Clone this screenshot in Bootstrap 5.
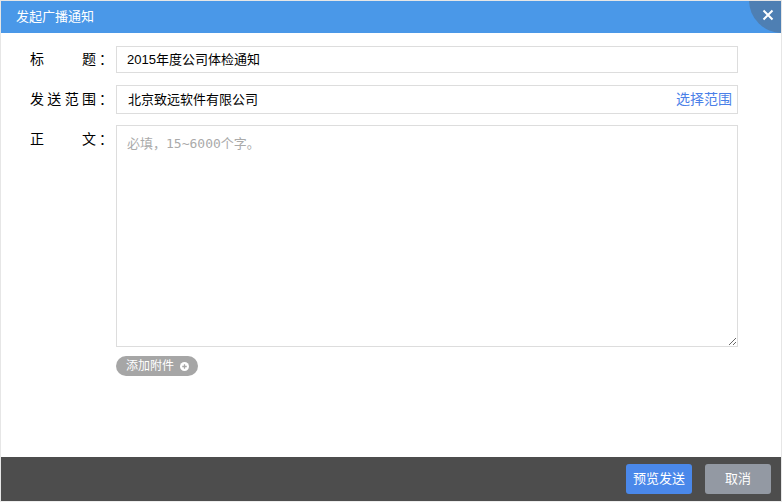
<!DOCTYPE html>
<html lang="zh">
<head>
<meta charset="utf-8">
<title>发起广播通知</title>
<link rel="stylesheet" href="https://cdn.jsdelivr.net/npm/bootstrap@5.3.0/dist/css/bootstrap.min.css">
<style>
html,body{height:100%;}
body{margin:0;background:#fff;font-family:"Liberation Sans","Noto Sans CJK SC",sans-serif;font-size:13px;color:#000;overflow:hidden;}
.dlg{width:782px;height:502px;border:1px solid #e6e6e6;border-bottom-color:#eee;overflow:hidden;}
.dlg-head{height:32px;background:#4a98e8;color:#fff;font-size:13px;padding-left:15px;overflow:hidden;}
.dlg-close{position:absolute;right:-1px;top:-1px;width:33px;height:33px;background:#4e7fb3;border-bottom-left-radius:33px;border:0;padding:0;}
.dlg-close svg{position:absolute;right:8px;top:9px;}
.dlg-body{padding:13px 43px 0 29px;}
.lbl{width:86px;flex:none;font-size:14px;display:flex;}
.lbl-name{width:66px;display:flex;justify-content:space-between;}
.lbl-colon{width:20px;text-align:center;}
.fld{width:622px;border:1px solid #ddd;border-width:1px;background:#fff;}
.fld-title{height:27px;padding:0 10px;line-height:25px;}
.fld-range{height:29px;padding:0 5px 0 11px;line-height:27px;}
.pick{color:#4a80e8;font-size:14px;text-decoration:none;}
.fld-text{height:222px;padding:9px 10px;resize:both;outline:0;font-family:"DejaVu Sans Mono","Noto Sans CJK SC",monospace;font-size:13px;line-height:18px;display:block;}
.fld-text::placeholder{color:#aaa;opacity:1;}
.add-pill{height:20px;width:82px;background:#a6a6a6;color:#fff;border-radius:10px;font-size:12px;padding-left:10px;gap:6px;}
.add-ico{width:9px;height:9px;}
.rw1{margin-bottom:12px;height:27px;}
.rw2{margin-bottom:11px;height:29px;}
.rw3{margin-bottom:9px;height:222px;}
.dlg-foot{height:44px;background:#4d4d4d;padding-right:10px;gap:13px;}
.btn-act{width:66px;height:30px;border:0;border-radius:3px;color:#fff;font-size:13px;padding:0;}
.btn-send{background:#4a88ea;}
.btn-off{background:#9399a3;}
</style>
</head>
<body>
<div class="dlg d-flex flex-column">
  <div class="dlg-head d-flex align-items-center position-relative">
    <span>发起广播通知</span>
    <button class="dlg-close" type="button" aria-label="关闭">
      <svg width="12" height="12" viewBox="0 0 12 12"><path d="M1.5 1.5L10.5 10.5M10.5 1.5L1.5 10.5" stroke="#fff" stroke-width="2" fill="none"/></svg>
    </button>
  </div>
  <div class="dlg-body flex-grow-1">
    <div class="d-flex align-items-center rw1">
      <div class="lbl"><span class="lbl-name"><span>标</span><span>题</span></span><span class="lbl-colon">：</span></div>
      <div class="fld fld-title">2015年度公司体检通知</div>
    </div>
    <div class="d-flex align-items-center rw2">
      <div class="lbl"><span class="lbl-name"><span>发</span><span>送</span><span>范</span><span>围</span></span><span class="lbl-colon">：</span></div>
      <div class="fld fld-range d-flex justify-content-between"><span>北京致远软件有限公司</span><a class="pick" href="#">选择范围</a></div>
    </div>
    <div class="d-flex align-items-start rw3">
      <div class="lbl pt-1"><span class="lbl-name"><span>正</span><span>文</span></span><span class="lbl-colon">：</span></div>
      <textarea class="fld fld-text" placeholder="必填，15~6000个字。"></textarea>
    </div>
    <div class="d-flex">
      <div class="lbl"></div>
      <div class="add-pill d-flex align-items-center">
        <span>添加附件</span>
        <svg class="add-ico" viewBox="0 0 10 10"><circle cx="5" cy="5" r="5" fill="#fff"/><path d="M2.5 5H7.5M5 2.5V7.5" stroke="#a6a6a6" stroke-width="1.4"/></svg>
      </div>
    </div>
  </div>
  <div class="dlg-foot d-flex justify-content-end align-items-center">
    <button class="btn-act btn-send" type="button">预览发送</button>
    <button class="btn-act btn-off" type="button">取消</button>
  </div>
</div>
<script src="https://cdn.jsdelivr.net/npm/bootstrap@5.3.0/dist/js/bootstrap.bundle.min.js"></script>
</body>
</html>
